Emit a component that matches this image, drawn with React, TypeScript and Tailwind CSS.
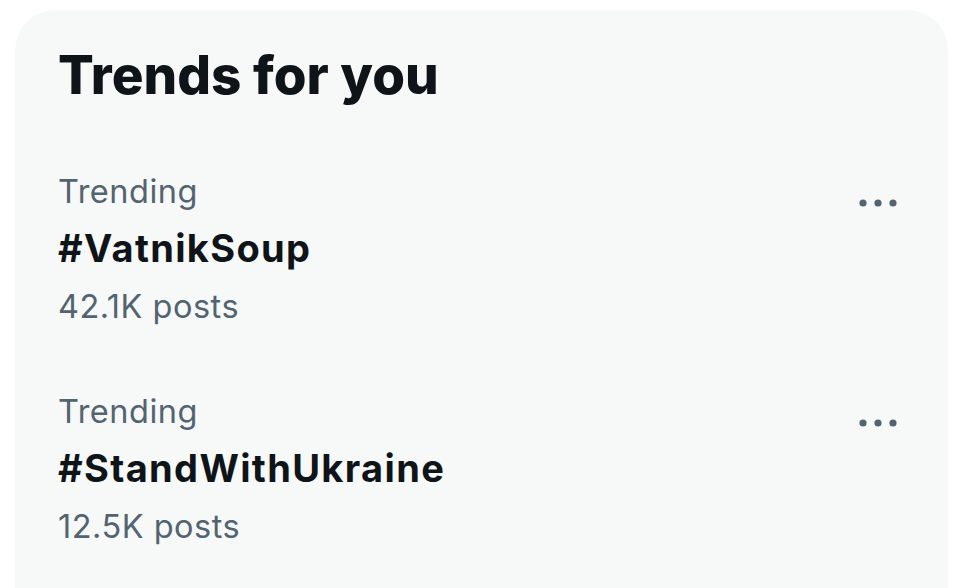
const trends = [
  { label: "Trending", tag: "#VatnikSoup", posts: "42.1K posts" },
  { label: "Trending", tag: "#StandWithUkraine", posts: "12.5K posts" },
];

function MoreIcon() {
  return (
    <svg viewBox="0 0 48 48" className="w-[48px] h-[48px] fill-[#536471]">
      <circle cx="9" cy="24" r="3.6" />
      <circle cx="24" cy="24" r="3.6" />
      <circle cx="39" cy="24" r="3.6" />
    </svg>
  );
}

export default function App() {
  return (
    <div className="w-[977px] h-[588px] overflow-hidden bg-white pl-[15px] pt-[10px] font-['Inter',sans-serif]">
      <div className="w-[933px] h-[620px] rounded-[40px] bg-[#f7f9f9]">
        {/* header */}
        <div className="pl-[43px] pr-[45px] pt-[35px] pb-[35px]">
          <h2 className="text-[53px] leading-[60px] font-extrabold text-[#0f1419]">
            Trends for you
          </h2>
        </div>

        {trends.map((t) => (
          <div key={t.tag} className="flex items-start justify-between pl-[43px] pr-[46px] pt-[32px] pb-[33px]">
            <div className="flex flex-col">
              <span className="text-[32.5px] leading-[40px] text-[#536471] tracking-[0.5px]">{t.label}</span>
              <span className="mt-[11px] text-[38px] leading-[50px] font-bold text-[#0f1419] tracking-[1.35px]">{t.tag}</span>
              <span className="mt-[14px] text-[32.5px] leading-[40px] text-[#536471] tracking-[0.5px]">{t.posts}</span>
            </div>
            <div className="mt-[7px]">
              <MoreIcon />
            </div>
          </div>
        ))}
      </div>
    </div>
  );
}
